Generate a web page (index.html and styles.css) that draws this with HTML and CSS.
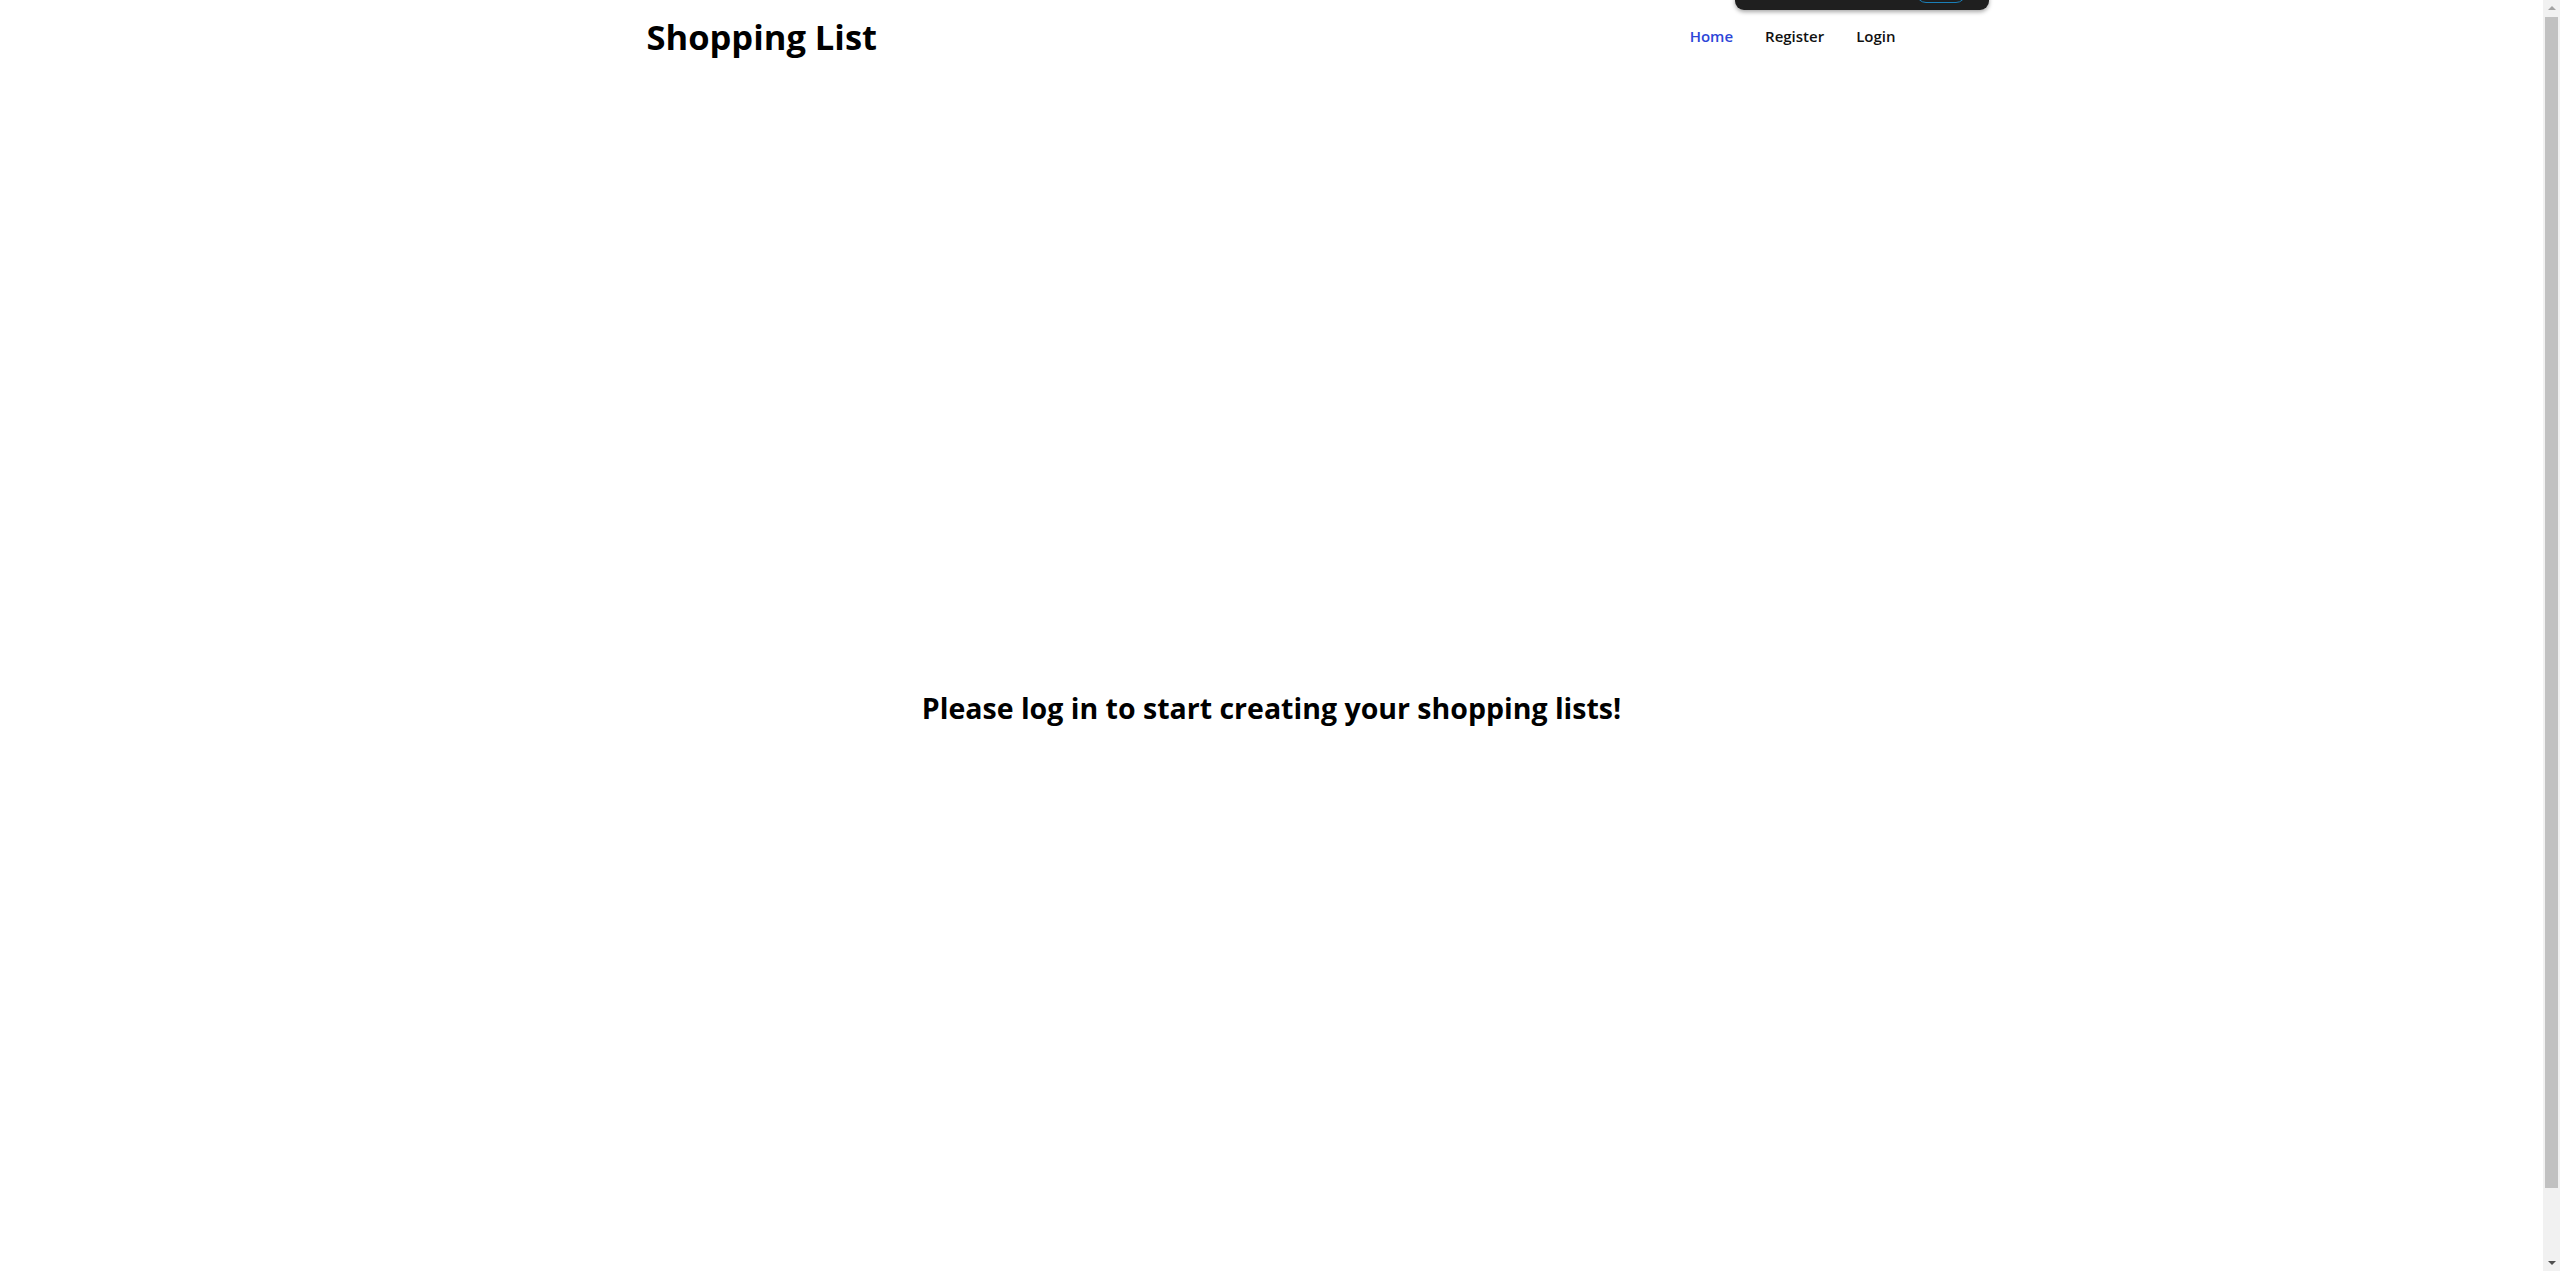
FILE: index.html
```html
<!DOCTYPE html>
<html lang="en">
<head>
<meta charset="utf-8">
<title>Shopping List</title>
<link rel="stylesheet" href="styles.css">
</head>
<body>
<div class="window">
  <div class="viewport">
    <header class="header">
      <div class="container header-inner">
        <h1 class="brand">Shopping List</h1>
        <nav class="nav">
          <a class="nav-link active" href="#">Home</a>
          <a class="nav-link" href="#">Register</a>
          <a class="nav-link" href="#">Login</a>
        </nav>
      </div>
    </header>
    <main class="main">
      <h2 class="prompt">Please log in to start creating your shopping lists!</h2>
    </main>
    <div class="overlay-bar"><span class="overlay-btn"></span></div>
  </div>
  <div class="scrollbar">
    <span class="arrow up"></span>
    <span class="thumb"></span>
    <span class="arrow down"></span>
  </div>
</div>
</body>
</html>
```
FILE: styles.css
```css
html, body {
  margin: 0;
  padding: 0;
  height: 100%;
  overflow: hidden;
  background: #fff;
}
body {
  font-family: "Open Sans", "Noto Sans", sans-serif;
  color: #000;
}
.window {
  display: flex;
  height: 100vh;
}
.viewport {
  flex: 1;
  position: relative;
  overflow: hidden;
}
.container {
  max-width: 1280px;
  margin: 0 auto;
  padding: 0 16px;
  box-sizing: border-box;
}
.header-inner {
  height: 72px;
  display: flex;
  align-items: center;
  justify-content: space-between;
}
.brand {
  margin: 0 0 0 -1px;
  font-size: 34.5px;
  font-weight: 700;
  letter-spacing: 0;
}
.nav {
  display: flex;
  gap: 32px;
}
.nav-link {
  text-decoration: none;
  color: #111;
  font-size: 15px;
  font-weight: 600;
}
.nav-link.active {
  color: #2c46d8;
}
.main {
  min-height: 1271px;
  display: flex;
  align-items: center;
  justify-content: center;
}
.prompt {
  margin: 0;
  font-size: 28.5px;
  font-weight: 700;
}
.overlay-bar {
  position: absolute;
  top: -20px;
  left: 1735px;
  width: 254px;
  height: 30px;
  background: #1f1f1f;
  border-radius: 0 0 9px 9px;
  box-shadow: 0 2px 4px rgba(0,0,0,0.35);
}
.overlay-btn {
  position: absolute;
  left: 181px;
  bottom: 7px;
  width: 50px;
  height: 20px;
  border: 1px solid #1a7fb8;
  border-radius: 10px;
  box-sizing: border-box;
}
.scrollbar {
  width: 17px;
  background: #f1f1f1;
  display: flex;
  flex-direction: column;
  align-items: center;
}
.arrow {
  width: 0;
  height: 0;
  border-left: 4px solid transparent;
  border-right: 4px solid transparent;
  margin: 6px 0;
}
.arrow.up {
  border-bottom: 4px solid #a3a3a3;
}
.arrow.down {
  border-top: 4px solid #505050;
}
.thumb {
  width: 13px;
  height: 1171px;
  background: #c1c1c1;
  margin-top: 1px;
  margin-bottom: auto;
}
```
